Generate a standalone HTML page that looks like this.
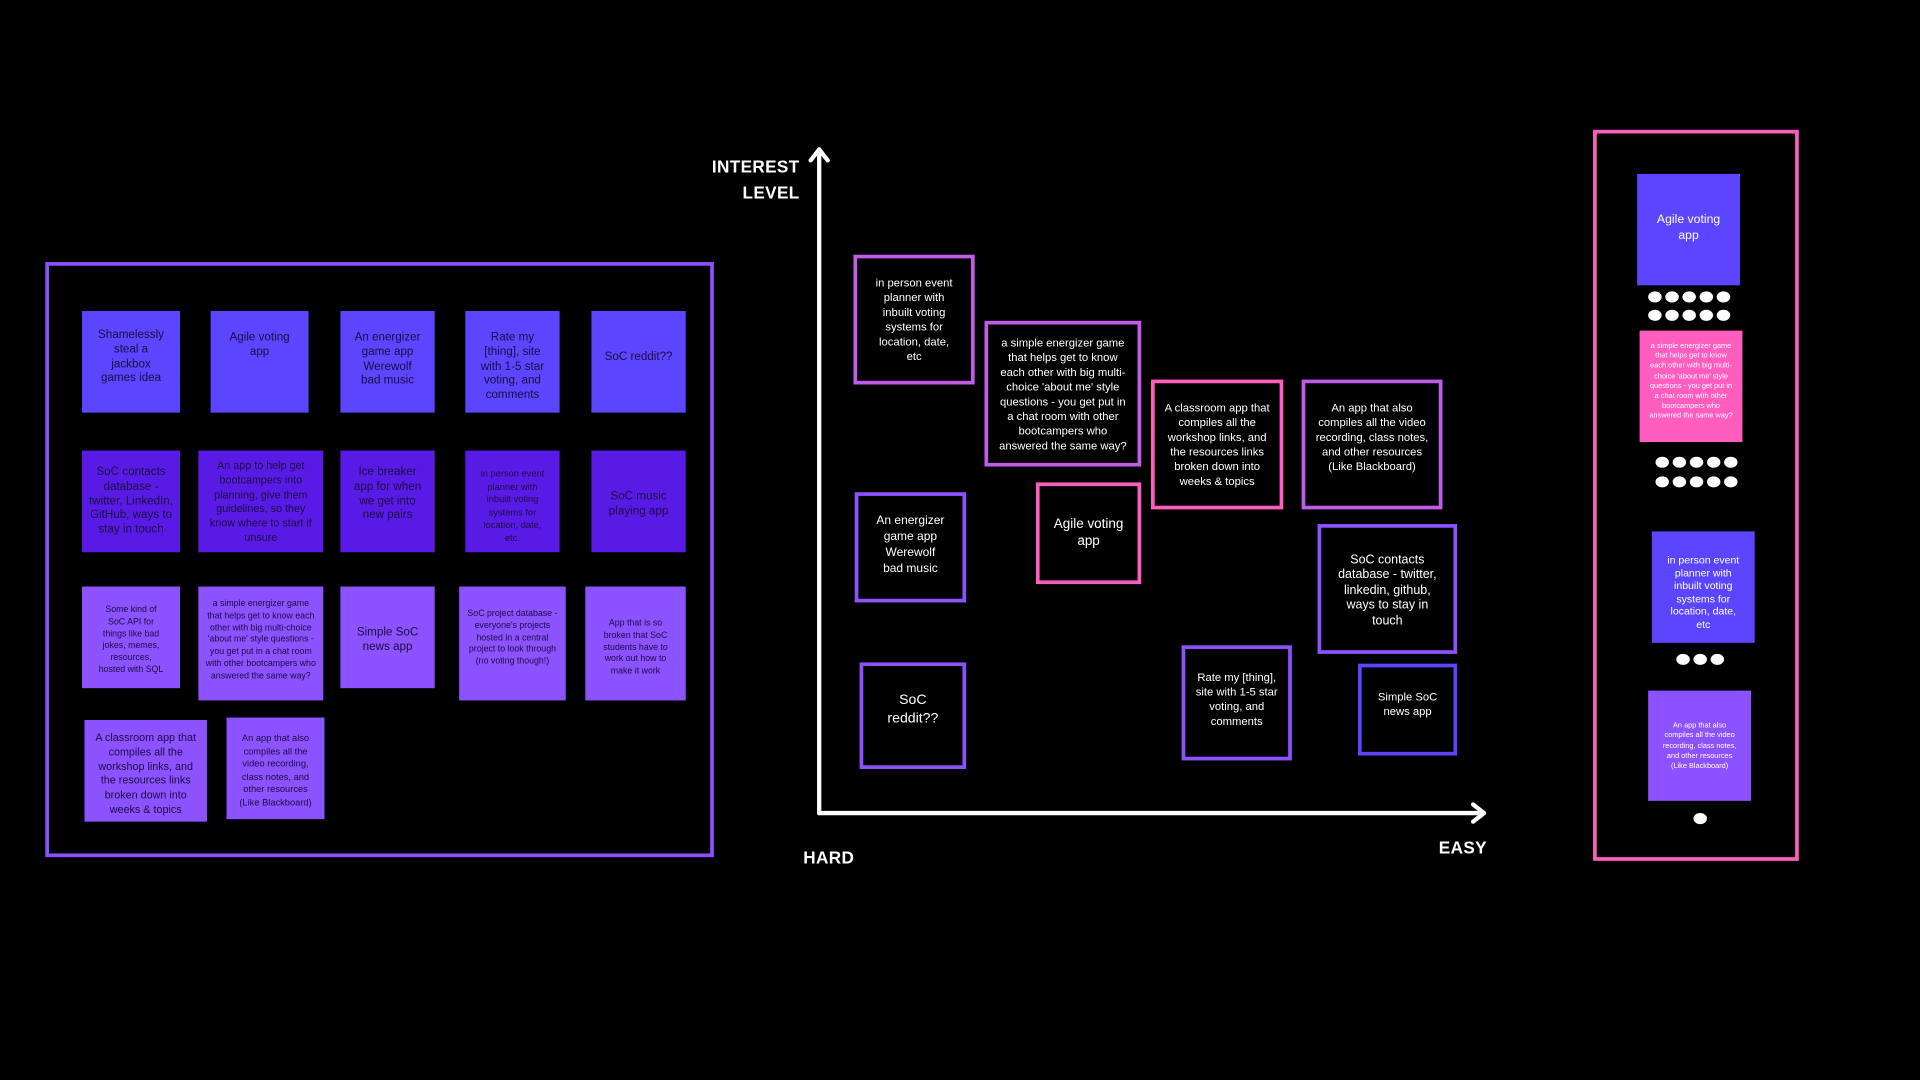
<!DOCTYPE html>
<html><head><meta charset="utf-8"><style>
html,body{margin:0;padding:0;background:#000;}
body{width:1920px;height:1080px;overflow:hidden;position:relative;}
#s{position:absolute;left:0;top:0;width:1568px;height:882px;transform:scale(1.22449);transform-origin:0 0;font-family:"Liberation Sans Narrow","Liberation Sans",sans-serif;}
.a{position:absolute;box-sizing:border-box;display:flex;align-items:center;justify-content:center;text-align:center;}
.n{color:#1a0d40;font-size:9.5px;line-height:11.8px;padding:4px 8px;align-items:flex-start;padding-top:14px;}
.b1{background:#5b45ff}.b2{background:#5a1ae6}.b3{background:#8c52ff}
.sm{font-size:7.2px;line-height:9.8px;}
.m{border:3px solid;color:#fff;font-size:9.2px;line-height:12px;padding:4px 8px;}
.v{border-color:#c05ce8}.p{border-color:#ff5ebf}.u{border-color:#8c52ff}.bl{border-color:#5b45ff}
.d{position:absolute;width:11px;height:9px;border-radius:50%;background:#fff;}
.lbl{position:absolute;color:#fff;font-weight:bold;font-size:14px;line-height:21px;letter-spacing:.3px;font-family:"Liberation Sans",sans-serif;}
</style></head><body><div id="s">
<div style="position:absolute;left:37px;top:214px;width:546px;height:486px;border:3px solid #8c52ff;box-sizing:border-box"></div>
<div class="a n b1" style="left:67px;top:254px;width:80px;height:83px;padding:14px 12px 4px">Shamelessly steal a jackbox games idea</div>
<div class="a n b1" style="left:172px;top:254px;width:80px;height:83px;padding:16px 14px 4px">Agile voting app</div>
<div class="a n b1" style="left:278px;top:254px;width:77px;height:83px;padding:16px 10px 4px">An energizer game app Werewolf bad music</div>
<div class="a n b1" style="left:380px;top:254px;width:77px;height:83px;padding:16px 12px 4px">Rate my [thing], site with 1-5 star voting, and comments</div>
<div class="a n b1" style="left:483px;top:254px;width:77px;height:83px;padding-top:32px">SoC reddit??</div>
<div class="a n b2" style="left:67px;top:368px;width:80px;height:83px;padding:12px 3px 4px">SoC contacts database - twitter, LinkedIn, GitHub, ways to stay in touch</div>
<div class="a n b2" style="left:162px;top:368px;width:102px;height:83px;padding:7px 8px 4px;font-size:8.8px">An app to help get bootcampers into planning, give them guidelines, so they know where to start if unsure</div>
<div class="a n b2" style="left:278px;top:368px;width:77px;height:83px;padding:12px 8px 4px">Ice breaker app for when we get into new pairs</div>
<div class="a n b2 sm" style="left:380px;top:368px;width:77px;height:83px;padding:14px 8px 4px;font-size:7.6px;line-height:10.5px">in person event planner with inbuilt voting systems for location, date, etc.</div>
<div class="a n b2" style="left:483px;top:368px;width:77px;height:83px;align-items:center;padding:4px 14px 0">SoC music playing app</div>
<div class="a n b3 sm" style="left:67px;top:479px;width:80px;height:83px;padding:14px 12px 4px">Some kind of SoC API for things like bad jokes, memes, resources, hosted with SQL</div>
<div class="a n b3 sm" style="left:162px;top:479px;width:102px;height:93px;padding:9px 6px 4px">a simple energizer game that helps get to know each other with big multi-choice 'about me' style questions - you get put in a chat room with other bootcampers who answered the same way?</div>
<div class="a n b3" style="left:278px;top:479px;width:77px;height:83px;align-items:center;padding:4px 12px 0">Simple SoC news app</div>
<div class="a n b3 sm" style="left:375px;top:479px;width:87px;height:93px;padding:17px 5px 4px">SoC project database - everyone's projects hosted in a central project to look through (no voting though!)</div>
<div class="a n b3 sm" style="left:478px;top:479px;width:82px;height:93px;padding:25px 10px 4px">App that is so broken that SoC students have to work out how to make it work</div>
<div class="a n b3" style="left:69px;top:588px;width:100px;height:83px;padding:9px 6px 4px;font-size:8.8px">A classroom app that compiles all the workshop links, and the resources links broken down into weeks &amp; topics</div>
<div class="a n b3 sm" style="left:185px;top:586px;width:80px;height:83px;padding:12px 8px 4px;font-size:7.6px;line-height:10.5px">An app that also compiles all the video recording, class notes, and other resources (Like Blackboard)</div>

<svg style="position:absolute;left:0;top:0" width="1568" height="882">
<g stroke="#fff" stroke-width="3.5" fill="none" stroke-linecap="round" stroke-linejoin="round">
<line x1="669" y1="122" x2="669" y2="664"/>
<polyline points="662,131 669,122 676,131"/>
<line x1="669" y1="664" x2="1211" y2="664"/>
<polyline points="1203,657 1212,664 1203,671"/>
</g></svg>
<div class="lbl" style="left:560px;top:126px;width:93px;text-align:right">INTEREST<br>LEVEL</div>
<div class="lbl" style="left:656px;top:690px">HARD</div>
<div class="lbl" style="left:1175px;top:682px">EASY</div>

<div class="a m v" style="left:697px;top:208px;width:99px;height:106px;padding:4px 14px">in person event planner with inbuilt voting systems for location, date, etc</div>
<div class="a m v" style="left:804px;top:262px;width:128px;height:119px;padding:4px 8px">a simple energizer game that helps get to know each other with big multi-choice 'about me' style questions - you get put in a chat room with other bootcampers who answered the same way?</div>
<div class="a m p" style="left:940px;top:310px;width:108px;height:106px;padding:4px 6px">A classroom app that compiles all the workshop links, and the resources links broken down into weeks &amp; topics</div>
<div class="a m v" style="left:1063px;top:310px;width:115px;height:106px;align-items:flex-start;padding:14px 6px 4px">An app that also compiles all the video recording, class notes, and other resources (Like Blackboard)</div>
<div class="a m u" style="left:698px;top:402px;width:91px;height:90px;align-items:flex-start;padding:14px 14px 4px;font-size:9.8px;line-height:13px">An energizer game app Werewolf bad music</div>
<div class="a m p" style="left:846px;top:394px;width:86px;height:83px;align-items:flex-start;padding:24px 4px 4px;font-size:11px;line-height:14px">Agile voting<br>app</div>
<div class="a m u" style="left:1076px;top:428px;width:114px;height:106px;padding:8px 8px 4px;font-size:10.2px;line-height:12.5px">SoC contacts database - twitter, linkedin, github, ways to stay in touch</div>
<div class="a m u" style="left:702px;top:541px;width:87px;height:87px;font-size:11.5px;line-height:15px;padding:0 20px 10px">SoC reddit??</div>
<div class="a m u" style="left:965px;top:527px;width:90px;height:94px;align-items:flex-start;padding:17px 6px 4px">Rate my [thing], site with 1-5 star voting, and comments</div>
<div class="a m bl" style="left:1109px;top:542px;width:81px;height:75px;padding:0 4px 10px">Simple SoC<br>news app</div>

<div style="position:absolute;left:1301px;top:106px;width:168px;height:597px;border:3px solid #ff5ebf;box-sizing:border-box"></div>
<div class="a" style="left:1337px;top:142px;width:84px;height:91px;background:#5b45ff;color:#fff;font-size:10px;line-height:13px;padding-bottom:4px">Agile voting<br>app</div>
<div class="a" style="left:1339px;top:270px;width:84px;height:91px;background:#ff5ebf;color:#fff;font-size:6px;line-height:8.2px;padding:9px 7px 3px;align-items:flex-start">a simple energizer game that helps get to know each other with big multi-choice 'about me' style questions - you get put in a chat room with other bootcampers who answered the same way?</div>
<div class="a" style="left:1349px;top:434px;width:84px;height:91px;background:#5b45ff;color:#fff;font-size:8.6px;line-height:10.5px;padding:18px 10px 4px;align-items:flex-start">in person event planner with inbuilt voting systems for location, date, etc</div>
<div class="a" style="left:1346px;top:564px;width:84px;height:90px;background:#8c52ff;color:#fff;font-size:6px;line-height:8.3px;padding:25px 8px 4px;align-items:flex-start">An app that also compiles all the video recording, class notes, and other resources (Like Blackboard)</div>
<div class="d" style="left:1346px;top:238px"></div><div class="d" style="left:1360px;top:238px"></div><div class="d" style="left:1374px;top:238px"></div><div class="d" style="left:1388px;top:238px"></div><div class="d" style="left:1402px;top:238px"></div>
<div class="d" style="left:1346px;top:253px"></div><div class="d" style="left:1360px;top:253px"></div><div class="d" style="left:1374px;top:253px"></div><div class="d" style="left:1388px;top:253px"></div><div class="d" style="left:1402px;top:253px"></div>
<div class="d" style="left:1352px;top:373px"></div><div class="d" style="left:1366px;top:373px"></div><div class="d" style="left:1380px;top:373px"></div><div class="d" style="left:1394px;top:373px"></div><div class="d" style="left:1408px;top:373px"></div>
<div class="d" style="left:1352px;top:389px"></div><div class="d" style="left:1366px;top:389px"></div><div class="d" style="left:1380px;top:389px"></div><div class="d" style="left:1394px;top:389px"></div><div class="d" style="left:1408px;top:389px"></div>
<div class="d" style="left:1369px;top:534px"></div><div class="d" style="left:1383px;top:534px"></div><div class="d" style="left:1397px;top:534px"></div>
<div class="d" style="left:1383px;top:664px"></div>
</div></body></html>
